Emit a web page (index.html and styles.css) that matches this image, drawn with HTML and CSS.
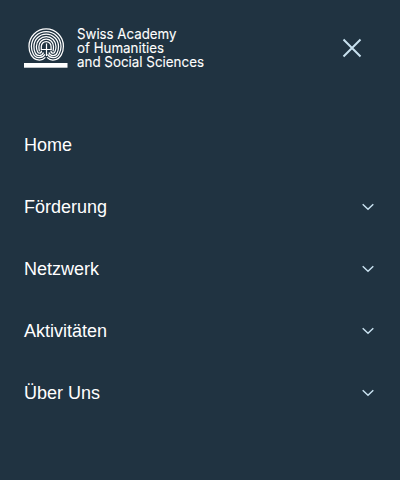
FILE: index.html
```
<!DOCTYPE html>
<html lang="de">
<head>
<meta charset="utf-8">
<title>Swiss Academy of Humanities and Social Sciences</title>
<link rel="stylesheet" href="styles.css">
</head>
<body>
<header class="header">
  <a class="brand" aria-label="Swiss Academy of Humanities and Social Sciences">
    <svg class="logo" width="184" height="48" viewBox="0 0 184 48">
      <path class="maze cross" d="M17.500 25.500H27.500M22.500 19.500V32"/>
      <g class="maze" transform="translate(-.1 -.1)">
        <path d="M17.400 26V22.500a4.900 4.900 0 0 1 9.800 0V26"/>
        <path d="M15.500 27.500Q15 25 15 22.500a7.300 7.300 0 0 1 14.600 0Q29.600 25 29.100 27.500"/>
        <path d="M17.400 26.800a1.900 1.900 0 0 1-3.800 1Q12.500 25.500 12.500 22.500a9.800 9.800 0 0 1 19.600 0Q32.100 25.500 31 27.800a1.900 1.900 0 0 1-3.800-1"/>
        <path d="M19.600 28.600a4.400 4.400 0 0 1-8.300.2Q10 26 10 22.500a12.300 12.300 0 0 1 24.600 0Q34.600 26 33.300 28.800a4.400 4.400 0 0 1-8.300-.2"/>
        <path d="M21 30.500a6.600 6.600 0 0 1-11.700-.7Q7.500 26.500 7.500 22.500a14.800 14.800 0 0 1 29.600 0Q37.100 26.500 35.300 29.800a6.600 6.600 0 0 1-11.700.7"/>
        <path d="M21.500 33.500C18 37.500 10.500 37 7.200 31Q5.100 27.500 5.100 22.300a17.200 17.200 0 0 1 34.400 0Q39.500 27.500 37.400 31C34.100 37 26.600 37.500 23.100 33.500"/>
      </g>
      <rect class="bar" x="0" y="39" width="43.500" height="4.700"/>
      <g class="name">
        <text x="53" y="15" textLength="99.500" lengthAdjust="spacingAndGlyphs">Swiss Academy</text>
        <text x="53" y="29" textLength="87" lengthAdjust="spacingAndGlyphs">of Humanities</text>
        <text x="53" y="43" textLength="127" lengthAdjust="spacingAndGlyphs">and Social Sciences</text>
      </g>
    </svg>
  </a>
  <button class="close" aria-label="Menü schliessen"><svg width="20" height="20" viewBox="0 0 20 20"><path d="M1.500 1.500l17 17M18.500 1.500l-17 17"/></svg></button>
</header>
<nav class="menu">
  <a class="item">Home</a>
  <a class="item">Förderung<svg class="chevron" viewBox="0 0 12 8"><path d="M.7 1.300L6 6.300l5.300-5"/></svg></a>
  <a class="item">Netzwerk<svg class="chevron" viewBox="0 0 12 8"><path d="M.7 1.300L6 6.300l5.300-5"/></svg></a>
  <a class="item">Aktivitäten<svg class="chevron" viewBox="0 0 12 8"><path d="M.7 1.300L6 6.300l5.300-5"/></svg></a>
  <a class="item">Über Uns<svg class="chevron" viewBox="0 0 12 8"><path d="M.7 1.300L6 6.300l5.300-5"/></svg></a>
</nav>
</body>
</html>
```
FILE: styles.css
```
* { box-sizing: border-box; }
body {
  margin: 0;
  height: 480px;
  overflow: hidden;
  background: #203341;
  color: #fff;
  font-family: "Liberation Sans", Arial, sans-serif;
}
.header {
  display: flex;
  justify-content: space-between;
  align-items: flex-start;
  padding: 24px 38px 0 24px;
  height: 114px;
}
.logo, .close svg, .chevron { display: block; fill: none; }
.logo { overflow: visible; }
.maze { stroke: #fff; stroke-width: 1.25; }
.cross { stroke-width: 1.2; }
.bar, .name { fill: #fff; }
.name { font: 14px Inter, "Liberation Sans", sans-serif; stroke: #fff; stroke-width: .1; }
.close { margin: 14px 0 0; padding: 0; border: 0; background: none; }
.close svg { stroke: #c8e1ef; stroke-width: 2; }
.item {
  display: flex;
  align-items: center;
  justify-content: space-between;
  height: 62px;
  padding: 0 26px 0 24px;
  font-size: 18px;
}
.chevron { width: 12px; height: 8px; stroke: #c8e1ef; stroke-width: 1.5; }
```
